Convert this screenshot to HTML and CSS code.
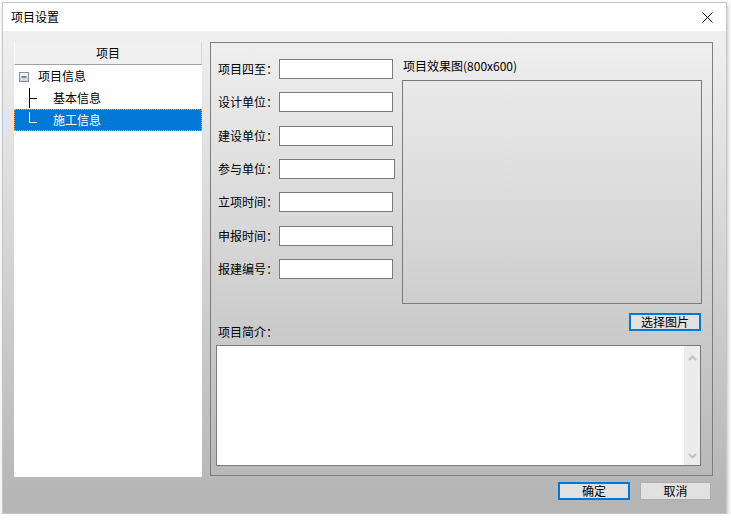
FILE: index.html
```html
<!DOCTYPE html>
<html lang="zh-CN">
<head>
<meta charset="utf-8">
<title>项目设置</title>
<link rel="stylesheet" href="styles.css">
</head>
<body>
<div class="window">
  <div class="titlebar">
    <span class="title">项目设置</span>
    <span class="close"><svg width="11" height="11" viewBox="0 0 11 11"><path d="M0.5 0.5 L10.5 10.5 M10.5 0.5 L0.5 10.5" stroke="#000" stroke-width="1" fill="none"/></svg></span>
  </div>
  <div class="client">
    <div class="main">
      <div class="tree">
        <div class="tree-head">项目</div>
        <ul class="tree-list">
          <li class="node root">
            <span class="toggle"><svg width="10" height="10" viewBox="0 0 10 10"><defs><linearGradient id="tg" x1="0" y1="0" x2="0" y2="1"><stop offset="0" stop-color="#ffffff"/><stop offset="1" stop-color="#c9d0dc"/></linearGradient></defs><rect x="0.5" y="0.5" width="9" height="9" fill="url(#tg)" stroke="#7f8ea6"/><path d="M2.5 5 H7.5" stroke="#1a2a44" stroke-width="1"/></svg></span>
            <span class="node-text">项目信息</span>
          </li>
          <li class="node child">
            <span class="branch"><svg width="8" height="22" viewBox="0 0 8 22"><path d="M0.5 1 V21 M0.5 11.5 H8" stroke="#000" stroke-width="1" fill="none"/></svg></span>
            <span class="node-text">基本信息</span>
          </li>
          <li class="node child selected">
            <span class="branch"><svg width="8" height="22" viewBox="0 0 8 22"><path d="M0.5 3 V14 M0.5 13.5 H8" stroke="#fff" stroke-width="1" fill="none"/></svg></span>
            <span class="node-text">施工信息</span>
          </li>
        </ul>
      </div>
      <div class="group">
        <div class="top">
          <div class="form">
            <label class="lbl">项目四至：</label><input class="field" type="text">
            <label class="lbl">设计单位：</label><input class="field" type="text">
            <label class="lbl">建设单位：</label><input class="field" type="text">
            <label class="lbl">参与单位：</label><input class="field wide" type="text">
            <label class="lbl">立项时间：</label><input class="field" type="text">
            <label class="lbl">申报时间：</label><input class="field" type="text">
            <label class="lbl">报建编号：</label><input class="field" type="text">
          </div>
          <div class="pic">
            <div class="pic-label">项目效果图(800x600)</div>
            <div class="pic-box"></div>
          </div>
        </div>
        <div class="mid-row">
          <span class="memo-label">项目简介：</span>
          <button class="btn focus pick">选择图片</button>
        </div>
        <div class="memo">
          <div class="memo-text"></div>
          <div class="scroll">
            <svg width="9" height="6" viewBox="0 0 9 6"><path d="M1 5 L4.5 1.5 L8 5" stroke="#c2c2c2" stroke-width="2" fill="none"/></svg>
            <svg width="9" height="6" viewBox="0 0 9 6"><path d="M1 1 L4.5 4.5 L8 1" stroke="#c2c2c2" stroke-width="2" fill="none"/></svg>
          </div>
        </div>
      </div>
    </div>
    <div class="footer">
      <button class="btn focus">确定</button>
      <button class="btn cancel">取消</button>
    </div>
  </div>
</div>
</body>
</html>
```
FILE: styles.css
```css
html, body {
  margin: 0;
  padding: 0;
  background: #ffffff;
}
body {
  font-family: "Noto Sans CJK SC", "Liberation Sans", sans-serif;
  font-size: 12px;
  color: #000;
}
.window {
  box-sizing: border-box;
  width: 725px;
  height: 512px;
  margin: 2px 0 0 2px;
  border: 1px solid #c6c6c6;
  box-shadow: 1px 2px 4px rgba(0, 0, 0, 0.25);
  display: flex;
  flex-direction: column;
  background: #fff;
}
.titlebar {
  height: 28px;
  flex: none;
  display: flex;
  align-items: center;
  justify-content: space-between;
  background: #ffffff;
}
.title {
  padding-left: 8px;
  font-size: 12px;
  line-height: 14px;
}
.close {
  width: 38px;
  height: 28px;
  display: flex;
  align-items: center;
  justify-content: center;
}
.close svg { display: block; }
.client {
  flex: 1;
  box-sizing: border-box;
  padding: 11px 13px 0 11px;
  background: linear-gradient(#f0f0f0, #b4b4b4);
  display: flex;
  flex-direction: column;
}
.main {
  display: flex;
  align-items: flex-start;
  gap: 8px;
}
.tree {
  width: 188px;
  height: 435px;
  background: #ffffff;
  display: flex;
  flex-direction: column;
}
.tree-head {
  box-sizing: border-box;
  height: 23px;
  background: #f0f0f0;
  border-bottom: 1px solid #a0a0a0;
  border-right: 1px solid #d6d6d6;
  border-left: 1px solid #ffffff;
  text-align: center;
  line-height: 22px;
}
.tree-list {
  list-style: none;
  margin: 0;
  padding: 0;
}
.node {
  height: 22px;
  display: flex;
  align-items: center;
  line-height: 14px;
}
.node.root { padding-left: 5px; }
.toggle {
  width: 10px;
  height: 10px;
  margin-right: 9px;
  margin-top: 2px;
}
.toggle svg, .branch svg { display: block; }
.node.child { padding-left: 15px; }
.branch {
  width: 8px;
  height: 22px;
  margin-right: 16px;
}
.node.selected {
  background: #0078d7;
  color: #ffffff;
  outline: 1px dotted #f0a050;
  outline-offset: -1px;
}
.group {
  box-sizing: border-box;
  width: 503px;
  height: 434px;
  border: 1px solid #7d7d7d;
  padding: 16px 10px 0 7px;
  display: flex;
  flex-direction: column;
}
.top {
  display: flex;
  align-items: flex-start;
}
.form {
  width: 177px;
  display: grid;
  grid-template-columns: 61px auto;
  row-gap: 13.33px;
  align-items: center;
}
.lbl {
  line-height: 14px;
  white-space: nowrap;
}
.field {
  box-sizing: border-box;
  width: 114px;
  height: 20px;
  margin: 0;
  padding: 0 2px;
  border: 1px solid #7a7a7a;
  background: #ffffff;
  font: inherit;
}
.field.wide { width: 116px; }
.pic {
  margin-left: 7px;
  width: 300px;
}
.pic-label {
  line-height: 14px;
  padding-left: 1px;
}
.pic-box {
  box-sizing: border-box;
  margin-top: 7px;
  width: 300px;
  height: 224px;
  border: 1px solid #7a7a7a;
}
.mid-row {
  margin-top: 9px;
  height: 26px;
  display: flex;
  justify-content: space-between;
}
.memo-label {
  align-self: flex-end;
  line-height: 14px;
}
.btn {
  box-sizing: border-box;
  width: 72px;
  height: 18px;
  margin: 0;
  padding: 0;
  border: 1px solid #adadad;
  background: #e1e1e1;
  font: inherit;
  line-height: 14px;
  color: #000;
}
.btn.focus {
  border: 2px solid #0078d7;
}
.btn.cancel { width: 71px; }
.pick {
  align-self: flex-start;
  margin-right: 1px;
}
.memo {
  box-sizing: border-box;
  margin: 6px 0 0 -2px;
  width: 485px;
  height: 121px;
  border: 1px solid #7a7a7a;
  background: #ffffff;
  display: flex;
}
.memo-text { flex: 1; }
.scroll {
  width: 16px;
  background: #ececec;
  display: flex;
  flex-direction: column;
  justify-content: space-between;
  align-items: center;
  padding: 9px 0 6px;
}
.scroll svg { display: block; }
.footer {
  margin-top: 5px;
  display: flex;
  justify-content: flex-end;
  gap: 10px;
  padding-right: 2px;
}
```
